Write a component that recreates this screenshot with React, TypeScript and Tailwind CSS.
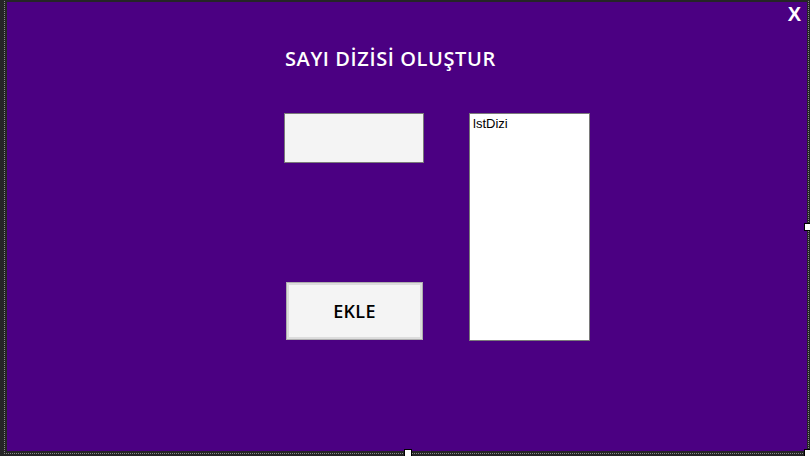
import * as React from 'react';

export default function App() {
  return (
    <div className="relative w-[810px] h-[456px] overflow-hidden bg-[#252526] pl-[7px] pt-[2px]">
      {/* Form surface */}
      <div className="w-[800px] h-[449px] bg-[#4B0082] flex flex-col pl-[277px] font-['Open_Sans',sans-serif]">
        <div className="h-[44px] flex justify-end pr-[6px]">
          <span className="text-white text-[20px] leading-[24px] font-bold font-['Liberation_Sans',Arial,sans-serif]">X</span>
        </div>
        <h1 className="ml-[1px] text-white text-[20px] leading-[26px] font-semibold tracking-[0.6px]">SAYI DİZİSİ OLUŞTUR</h1>

        <div className="mt-[41px] flex gap-[45px]">
          <div className="flex flex-col">
            <div className="w-[140px] h-[50px] bg-[#F4F4F4] border border-[#7A7A7A]" />
            <button className="mt-[119px] ml-[2px] w-[137px] h-[58px] bg-[#F4F4F4] border border-[#ADADAD] ring-2 ring-inset ring-[#DCDCDC] text-black text-[18px] font-semibold tracking-[0.3px]">
              EKLE
            </button>
          </div>
          <div className="w-[121px] h-[228px] bg-white border border-[#7A7A7A] pl-[3px] pt-[2px]">
            <div className="text-black text-[13px] leading-[15px] font-['Liberation_Sans',Arial,sans-serif]">lstDizi</div>
          </div>
        </div>
      </div>

      {/* Designer selection outline + grab handles */}
      <div className="absolute left-[4px] top-[-2px] w-[805px] h-[456px] border border-dotted border-[#8a8a8a] pointer-events-none" />
      <div className="absolute left-[404px] top-[449px] w-[8px] h-[8px] bg-white border border-black" />
      <div className="absolute left-[804px] top-[223px] w-[8px] h-[8px] bg-white border border-black" />
      <div className="absolute left-[804px] top-[449px] w-[8px] h-[8px] bg-white border border-black" />
    </div>
  );
}
